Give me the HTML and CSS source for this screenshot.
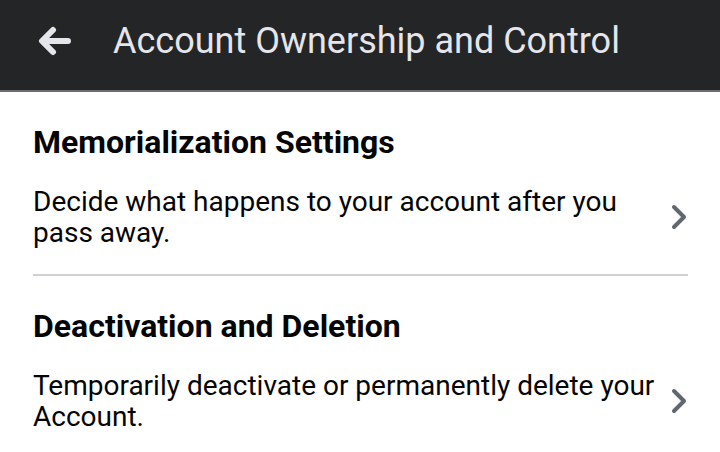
FILE: index.html
```html
<!DOCTYPE html>
<html>
<head>
<meta charset="utf-8">
<link rel="stylesheet" href="styles.css">
</head>
<body>
<header class="topbar">
  <svg class="back" width="36" height="30" viewBox="0 0 36 30">
    <path d="M6 15 H31 M16 4 L5 15 L16 26" fill="none" stroke="#e4e6eb" stroke-width="6" stroke-linecap="round" stroke-linejoin="round"/>
  </svg>
  <h1 class="title">Account Ownership and Control</h1>
</header>
<main class="list">
  <section class="item">
    <h2 class="item-title">Memorialization Settings</h2>
    <div class="item-row">
      <p class="item-desc">Decide what happens to your account after you pass away.</p>
      <svg class="chev" width="18" height="26" viewBox="0 0 18 26">
        <path d="M4 3 L14 13 L4 23" fill="none" stroke="#606770" stroke-width="4" stroke-linecap="round" stroke-linejoin="round"/>
      </svg>
    </div>
  </section>
  <section class="item">
    <h2 class="item-title">Deactivation and Deletion</h2>
    <div class="item-row">
      <p class="item-desc">Temporarily deactivate or permanently delete your Account.</p>
      <svg class="chev" width="18" height="26" viewBox="0 0 18 26">
        <path d="M4 3 L14 13 L4 23" fill="none" stroke="#606770" stroke-width="4" stroke-linecap="round" stroke-linejoin="round"/>
      </svg>
    </div>
  </section>
</main>
</body>
</html>
```
FILE: styles.css
```css
html, body {
  margin: 0;
  padding: 0;
  background: #ffffff;
  font-family: Roboto, "Noto Sans", sans-serif;
}
.topbar {
  height: 82px;
  padding-bottom: 8px;
  background: #242526;
  border-bottom: 2px solid #6b6c6e;
  display: flex;
  align-items: center;
  padding-left: 37px;
  box-sizing: content-box;
}
.back {
  display: block;
}
.title {
  margin: 0 0 0 40px;
  font-size: 36px;
  font-weight: 400;
  color: #e4e6eb;
  line-height: 40px;
  white-space: nowrap;
}
.list {
  margin: 0 32px 0 33px;
}
.item {
  padding: 32px 0 26px;
}
.item + .item {
  border-top: 2px solid #ced0d4;
}
.item-title {
  margin: 0;
  font-size: 32px;
  font-weight: 700;
  line-height: 36px;
  color: #050505;
}
.item-row {
  display: flex;
  align-items: center;
  justify-content: space-between;
  margin-top: 26px;
}
.item-desc {
  margin: 0;
  width: 630px;
  font-size: 28px;
  line-height: 31px;
  color: #050505;
}
.chev {
  display: block;
}
```
